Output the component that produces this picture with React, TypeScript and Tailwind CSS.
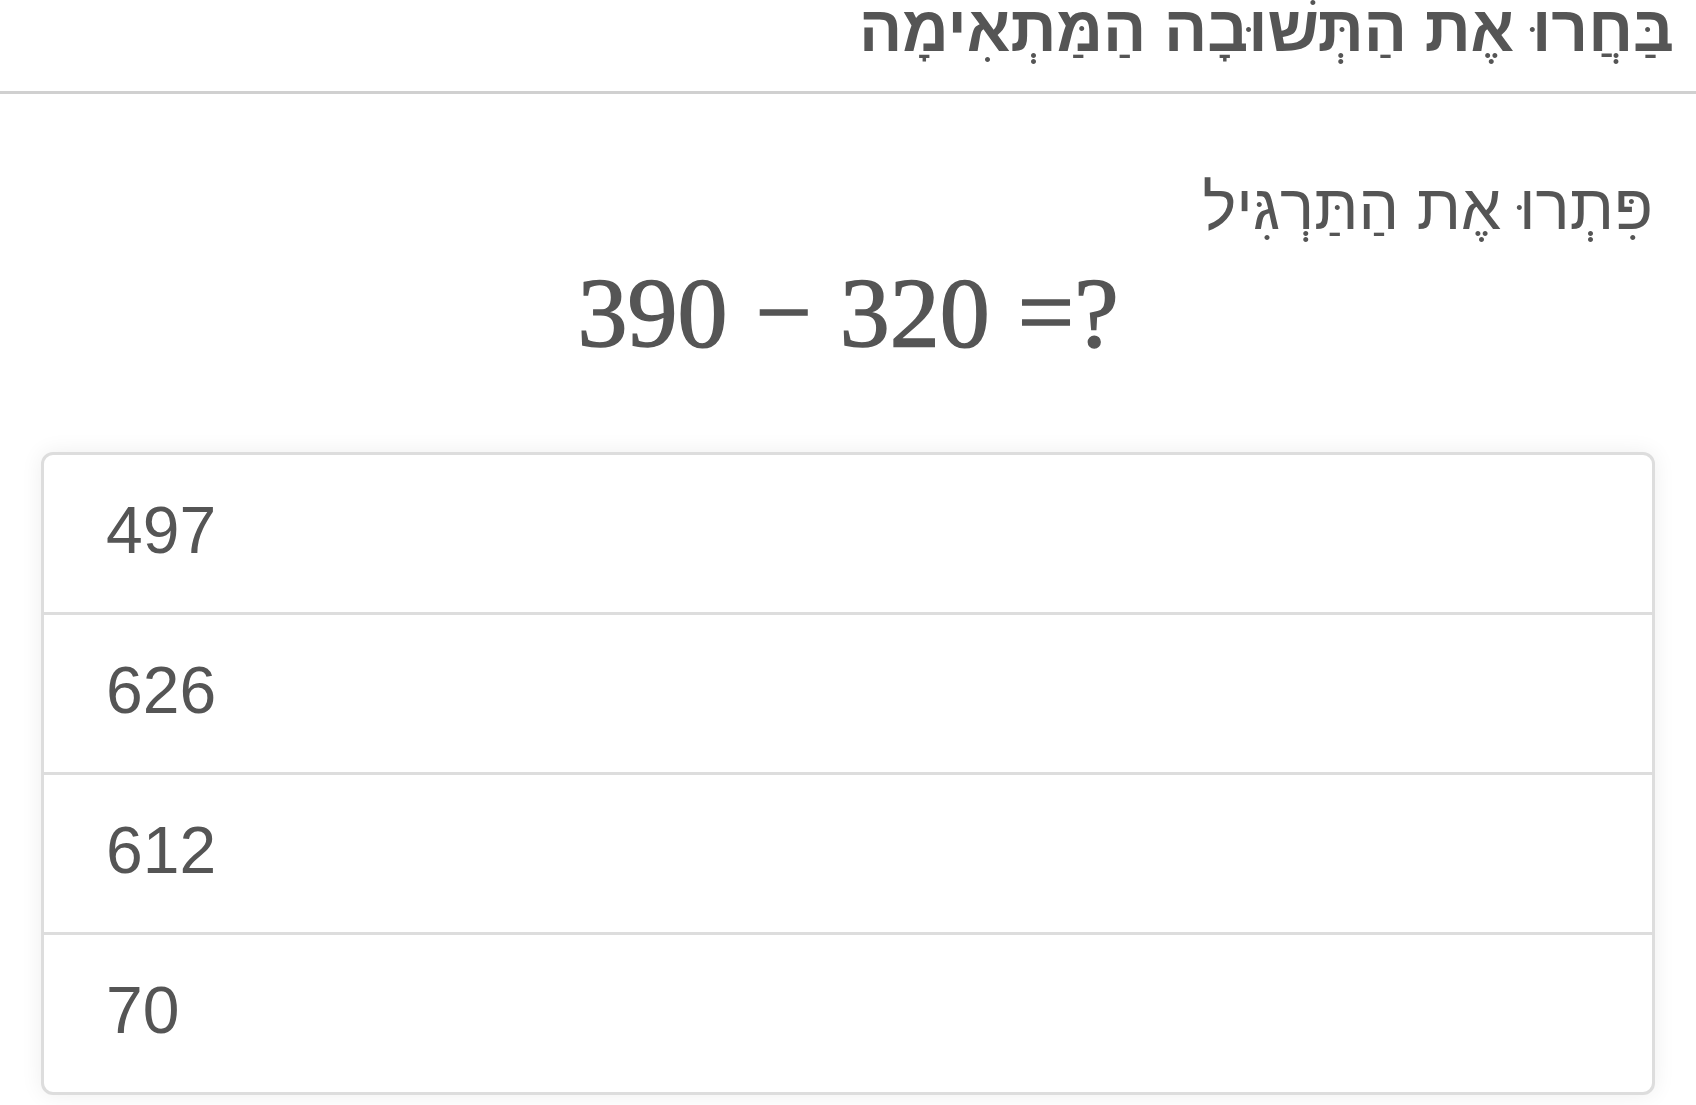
import React from "react";

const answers = ["497", "626", "612", "70"];

const hebrew = { fontFamily: '"Liberation Sans", Arial, sans-serif' };

export default function App() {
  return (
    <div className="min-h-[1105px] w-full bg-white text-[#555]">
      <header
        dir="rtl"
        className="h-[94px] border-b-[3px] border-[#d0d0d0] px-[22px] flex items-start"
      >
        <h1 className="text-[64px] leading-[58px] font-bold whitespace-nowrap" style={hebrew}>
          בַּחֲרוּ אֶת הַתְּשׁוּבָה הַמַּתְאִימָה
        </h1>
      </header>

      <main className="px-[41px]">
        <p dir="rtl" className="pt-[75px] text-[64px] leading-[76px] pr-[2px]" style={hebrew}>
          פִּתְרוּ אֶת הַתַּרְגִּיל
        </p>

        <div
          className="mt-[13px] flex justify-center text-[100px] leading-[110px] [-webkit-text-stroke:1.5px_#555]"
          style={{ fontFamily: '"Liberation Serif", "DejaVu Serif", serif' }}
        >
          <span>390</span>
          <span className="mx-[28px]">−</span>
          <span>320</span>
          <span className="ml-[28px]">=?</span>
        </div>

        <ul className="mt-[84px] rounded-[12px] border-[3px] border-[#dddddd] bg-white shadow-[0_0_22px_rgba(0,0,0,0.07)] overflow-hidden">
          {answers.map((a, i) => (
            <li
              key={a}
              className={`flex items-center pl-[62px] pb-[6px] text-[66px] ${
                i > 0 ? "h-[160px] border-t-[3px] border-[#dddddd]" : "h-[157px]"
              }`}
              style={{ fontFamily: '"Liberation Sans", Arial, sans-serif' }}
            >
              {a}
            </li>
          ))}
        </ul>
      </main>
    </div>
  );
}
